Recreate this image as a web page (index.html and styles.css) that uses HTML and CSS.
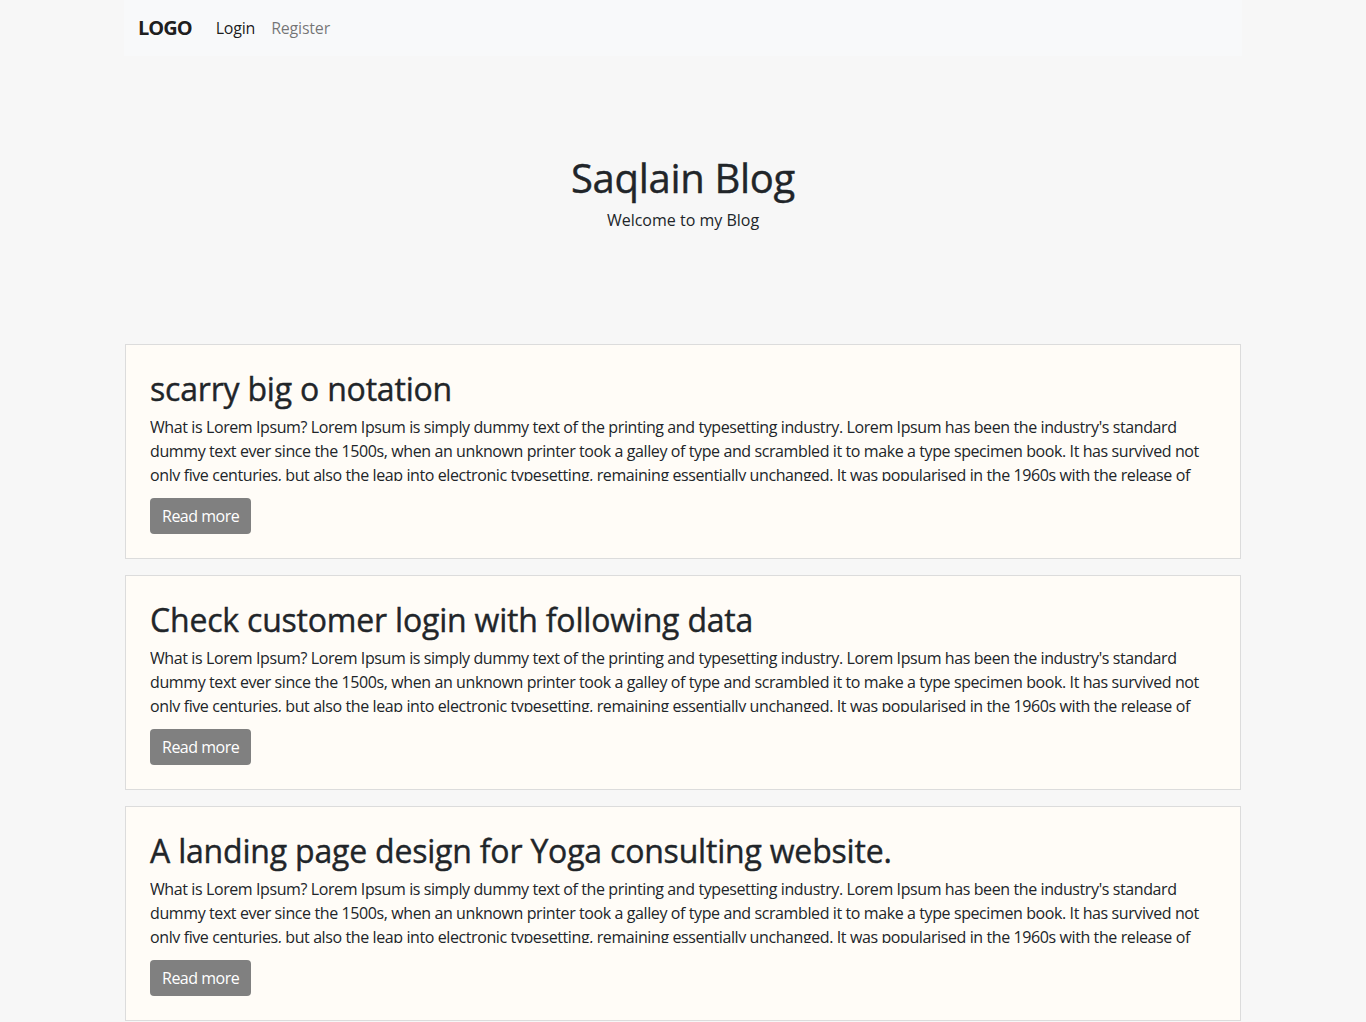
FILE: index.html
```html
<!DOCTYPE html>
<html lang="en">
<head>
<meta charset="utf-8">
<title>Saqlain Blog</title>
<link rel="stylesheet" href="styles.css">
</head>
<body>
<div class="container">
  <nav class="navbar">
    <a class="brand" href="#">LOGO</a>
    <a class="nav-link active" href="#">Login</a>
    <a class="nav-link" href="#">Register</a>
  </nav>
</div>
<header class="hero">
  <h1 class="hero-title">Saqlain Blog</h1>
  <p class="hero-sub">Welcome to my Blog</p>
</header>
<main class="container posts">
  <article class="card">
    <h2 class="card-title">scarry big o notation</h2>
    <p class="card-text">What is Lorem Ipsum? Lorem Ipsum is simply dummy text of the printing and typesetting industry. Lorem Ipsum has been the industry's standard dummy text ever since the 1500s, when an unknown printer took a galley of type and scrambled it to make a type specimen book. It has survived not only five centuries, but also the leap into electronic typesetting, remaining essentially unchanged. It was popularised in the 1960s with the release of Letraset sheets containing Lorem Ipsum passages, and more recently with desktop publishing software like Aldus PageMaker including versions of Lorem Ipsum.</p>
    <a class="btn" href="#">Read more</a>
  </article>
  <article class="card">
    <h2 class="card-title">Check customer login with following data</h2>
    <p class="card-text">What is Lorem Ipsum? Lorem Ipsum is simply dummy text of the printing and typesetting industry. Lorem Ipsum has been the industry's standard dummy text ever since the 1500s, when an unknown printer took a galley of type and scrambled it to make a type specimen book. It has survived not only five centuries, but also the leap into electronic typesetting, remaining essentially unchanged. It was popularised in the 1960s with the release of Letraset sheets containing Lorem Ipsum passages, and more recently with desktop publishing software like Aldus PageMaker including versions of Lorem Ipsum.</p>
    <a class="btn" href="#">Read more</a>
  </article>
  <article class="card">
    <h2 class="card-title">A landing page design for Yoga consulting website.</h2>
    <p class="card-text">What is Lorem Ipsum? Lorem Ipsum is simply dummy text of the printing and typesetting industry. Lorem Ipsum has been the industry's standard dummy text ever since the 1500s, when an unknown printer took a galley of type and scrambled it to make a type specimen book. It has survived not only five centuries, but also the leap into electronic typesetting, remaining essentially unchanged. It was popularised in the 1960s with the release of Letraset sheets containing Lorem Ipsum passages, and more recently with desktop publishing software like Aldus PageMaker including versions of Lorem Ipsum.</p>
    <a class="btn" href="#">Read more</a>
  </article>
</main>
</body>
</html>
```
FILE: styles.css
```css
* { box-sizing: border-box; }
body {
  margin: 0;
  background: #f7f7f7;
  color: #212529;
  font-family: "Open Sans", "Noto Sans", sans-serif;
  font-size: 16px;
  line-height: 1.5;
}
a { text-decoration: none; }
.container {
  width: 1118px;
  margin: 0 auto;
}
.navbar {
  display: flex;
  align-items: center;
  height: 56px;
  padding: 0 14px;
  background: #f8f9fa;
}
.brand {
  font-size: 20px;
  font-weight: 700;
  letter-spacing: -1px;
  color: rgba(0,0,0,0.9);
  margin-right: 24px;
}
.nav-link {
  color: rgba(0,0,0,0.55);
  margin-right: 16px;
  letter-spacing: -0.2px;
}
.nav-link.active { color: rgba(0,0,0,0.9); }
.hero {
  text-align: center;
  padding: 98px 0 0;
  height: 288px;
}
.hero-title {
  margin: 0 0 6px;
  font-size: 40px;
  font-weight: 500;
  line-height: 1.2;
  letter-spacing: -0.3px;
  -webkit-text-stroke: 0.4px currentColor;
}
.hero-sub { margin: 0; }
.posts {
  display: flex;
  flex-direction: column;
  gap: 16px;
  padding: 0 1px;
}
.card {
  background: #fffcf7;
  border: 1px solid #dcdcdc;
  padding: 24px;
}
.card-title {
  margin: 0 0 6px;
  padding-top: 1px;
  height: 40px;
  font-size: 32px;
  font-weight: 500;
  line-height: 38px;
  letter-spacing: -0.2px;
  -webkit-text-stroke: 0.4px currentColor;
}
.card-text {
  margin: 0 0 17px;
  height: 66px;
  overflow: hidden;
  letter-spacing: -0.4px;
}
.btn {
  display: inline-block;
  background: #808080;
  color: #fff;
  border-radius: 4px;
  padding: 6px 12px;
  height: 36px;
  letter-spacing: -0.5px;
}
```
